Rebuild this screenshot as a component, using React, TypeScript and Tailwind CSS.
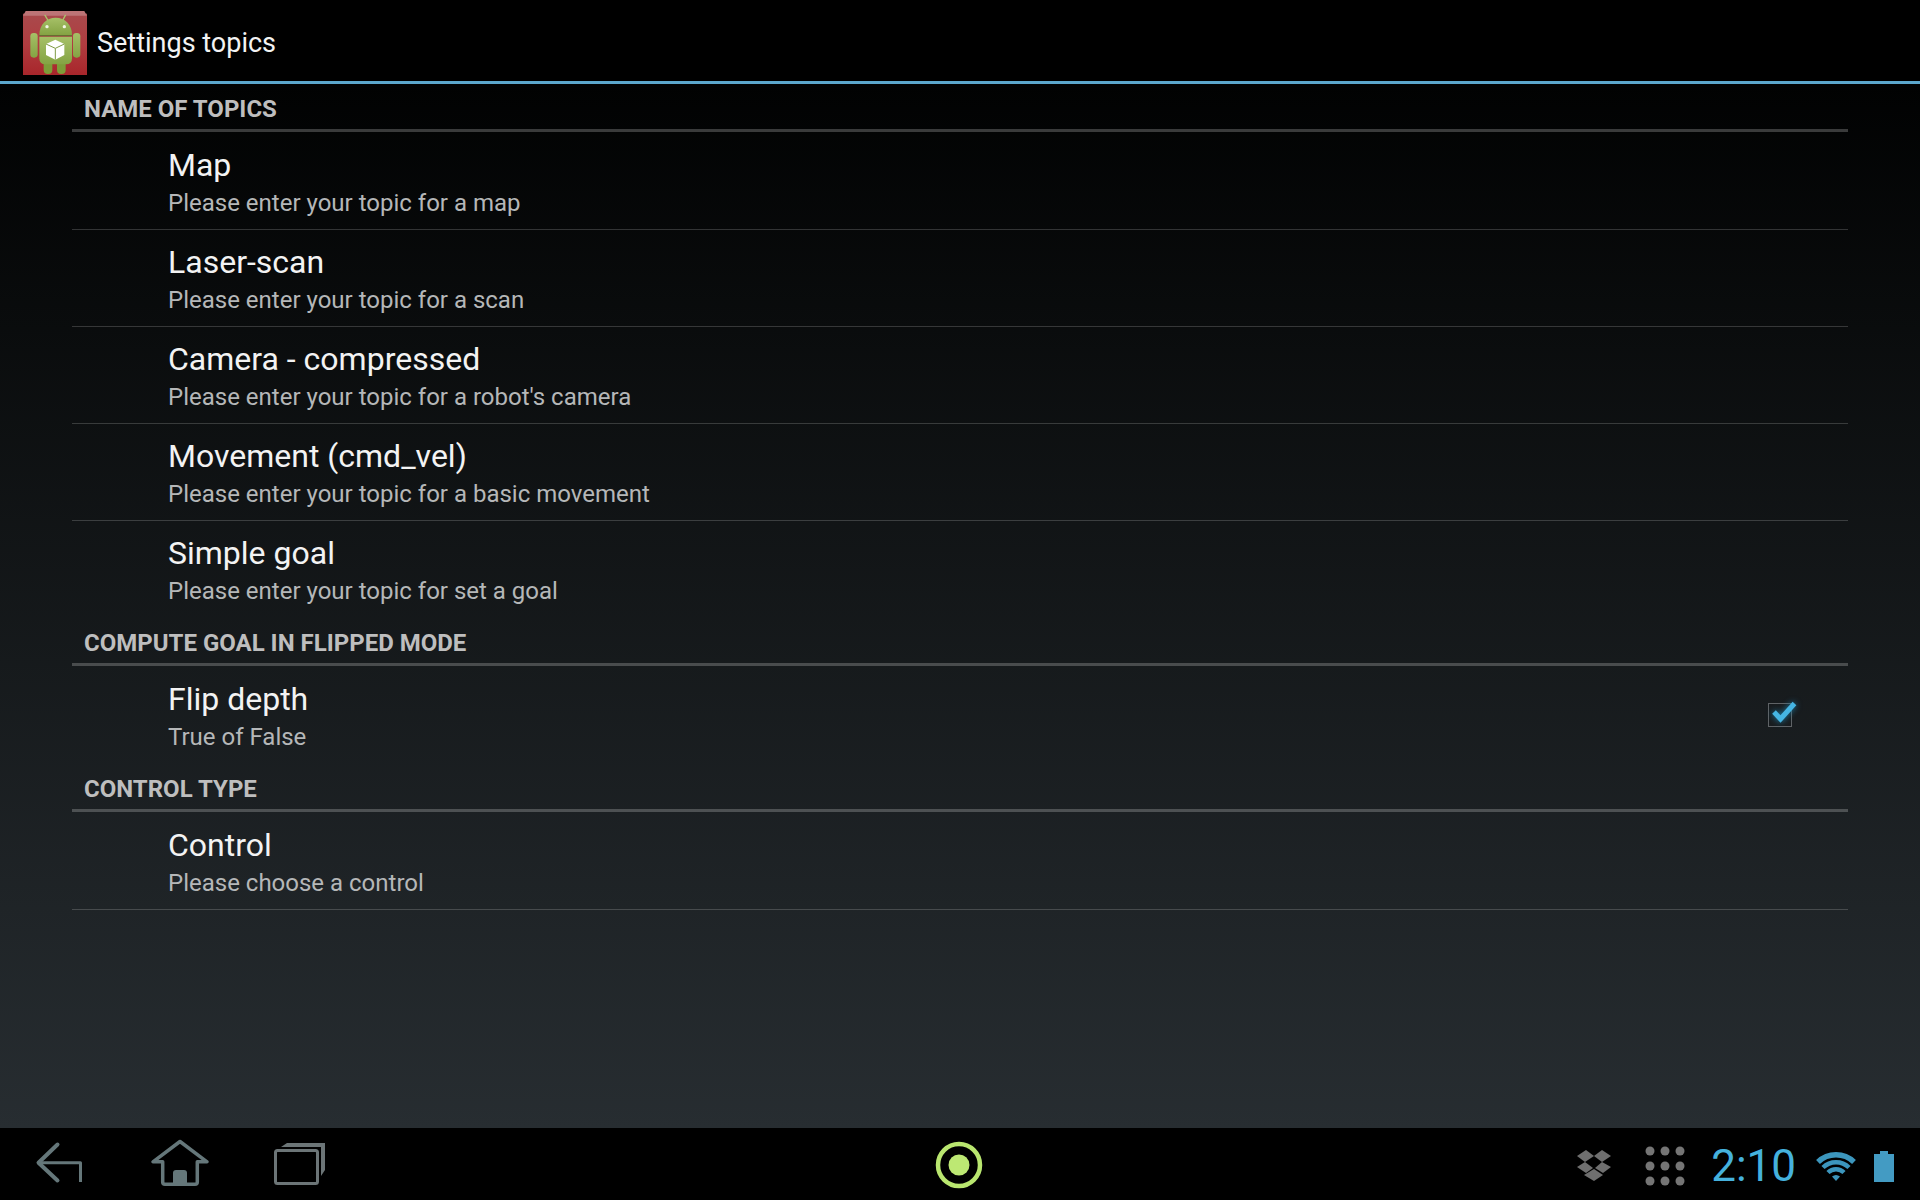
import { useState } from "react";

interface Preference {
  title: string;
  summary: string;
  kind?: "checkbox";
}

interface Category {
  name: string;
  items: Preference[];
}

const categories: Category[] = [
  {
    name: "NAME OF TOPICS",
    items: [
      { title: "Map", summary: "Please enter your topic for a map" },
      { title: "Laser-scan", summary: "Please enter your topic for a scan" },
      {
        title: "Camera - compressed",
        summary: "Please enter your topic for a robot's camera",
      },
      {
        title: "Movement (cmd_vel)",
        summary: "Please enter your topic for a basic movement",
      },
      { title: "Simple goal", summary: "Please enter your topic for set a goal" },
    ],
  },
  {
    name: "COMPUTE GOAL IN FLIPPED MODE",
    items: [
      { title: "Flip depth", summary: "True of False", kind: "checkbox" },
    ],
  },
  {
    name: "CONTROL TYPE",
    items: [{ title: "Control", summary: "Please choose a control" }],
  },
];

const AppLogo = () => (
  <svg viewBox="0 0 192 192" className="size-16 shrink-0" aria-hidden="true">
    <defs>
      <linearGradient id="red" x1="0" y1="0" x2="0" y2="1">
        <stop offset="0" stopColor="#a94a4c" />
        <stop offset="0.5" stopColor="#b03c40" />
        <stop offset="1" stopColor="#a8262b" />
      </linearGradient>
      <linearGradient id="green" x1="0" y1="0" x2="0" y2="1">
        <stop offset="0" stopColor="#a6c067" />
        <stop offset="1" stopColor="#84a343" />
      </linearGradient>
    </defs>
    <rect y="8" width="192" height="184" fill="url(#red)" />
    <path d="M8 0H184L192 14H0Z" fill="#bd7476" />
    {/* legs and arms */}
    <rect x="62" y="140" width="26" height="49" rx="12" fill="#7d9c38" />
    <rect x="102" y="140" width="26" height="49" rx="12" fill="#7d9c38" />
    <rect x="22" y="66" width="22" height="74" rx="10" fill="url(#green)" />
    <rect x="150" y="66" width="22" height="74" rx="10" fill="url(#green)" />
    {/* head */}
    <path
      d="M66 13L75 28M127 13L119 28"
      stroke="#a9c56a"
      strokeWidth="4"
      strokeLinecap="round"
    />
    <path d="M49 72C49 40 70 20 98 20S147 40 147 72Z" fill="url(#green)" />
    <circle cx="72" cy="47" r="5" fill="#f1f5e4" />
    <circle cx="124" cy="47" r="5" fill="#f1f5e4" />
    {/* body with the box */}
    <path
      d="M49 77H147V142Q147 160 129 160H67Q49 160 49 142Z"
      fill="url(#green)"
    />
    <path d="M49 74H147" stroke="#5d7430" strokeWidth="3" />
    <path d="M97 86L124 99V132L97 146L69 132V99Z" fill="#fff" />
    <path
      d="M69 99L97 112L124 99M97 112V146"
      stroke="#7f9a45"
      strokeWidth="3"
      fill="none"
    />
  </svg>
);

const BackIcon = () => (
  <svg viewBox="0 0 120 72" className="h-18 w-30" fill="none" stroke="#65777a" strokeWidth="3" strokeLinecap="round" strokeLinejoin="round">
    <path d="M57.5 16.5L38.5 34.7L57.5 52.5" strokeWidth="4" />
    <path d="M39 34.7H80.5V54" strokeLinecap="butt" />
  </svg>
);

const HomeIcon = () => (
  <svg viewBox="0 0 120 72" className="h-18 w-30" fill="none" stroke="#65777a" strokeWidth="3.5" strokeLinejoin="round">
    <path d="M60 13.5L33 33.8H42.7V54Q42.7 56.3 45 56.3H75Q77.3 56.3 77.3 54V33.8H87L60 13.5Z" />
    <path d="M53 56V45Q53 42 56 42H64Q67 42 67 45V56Z" fill="#65777a" stroke="none" />
  </svg>
);

const RecentIcon = () => (
  <svg viewBox="0 0 120 72" className="h-18 w-30" fill="none" stroke="#6c7577" strokeWidth="3">
    <rect x="35.5" y="22.5" width="42" height="33" rx="2" />
    <path d="M41 19L47 15H85V42L81 48V19Z" fill="#6c7577" stroke="none" />
  </svg>
);

const DropboxIcon = () => (
  <svg viewBox="0 0 34 32" className="h-8 w-[34px]" fill="#6f6f6f" aria-hidden="true">
    <path d="M9 0L17 6L8 12L0 6Z" />
    <path d="M25 0L34 6L25 12L17 6Z" />
    <path d="M8 12L16 18L9 23L0 17Z" />
    <path d="M25 12L34 17L26 23L18 18Z" />
    <path d="M17 19L26 25L17 31L7 25Z" />
  </svg>
);

const DotsIcon = () => (
  <svg viewBox="0 0 40 40" className="size-10" fill="#757575" aria-hidden="true">
    {[5, 20, 35].map((y) =>
      [5, 20, 35].map((x) => <circle key={`${x}-${y}`} cx={x} cy={y} r="4.5" />)
    )}
  </svg>
);

const WifiIcon = () => (
  <svg viewBox="0 0 40 30" className="h-[30px] w-10" fill="none" stroke="#3c96bd" aria-hidden="true">
    <path d="M2 11A26 26 0 0 1 38 11" strokeWidth="5.5" />
    <path d="M7 16.5A18.5 18.5 0 0 1 33 16.5" strokeWidth="4.5" />
    <path d="M12 21.5A11.5 11.5 0 0 1 28 21.5" strokeWidth="4.5" />
    <path d="M16 25.5Q20 22.5 24 25.5L20 30Z" fill="#3c96bd" stroke="none" />
  </svg>
);

const BatteryIcon = () => (
  <svg viewBox="0 0 20 31" className="h-[31px] w-5" fill="#439bc3" aria-hidden="true">
    <path d="M6 0H14V3H20V31H0V3H6Z" />
  </svg>
);

const PreferenceText = ({ title, summary }: Preference) => (
  <span className="flex flex-col pt-1.5">
    <span className="text-[32px] leading-[38px] text-[#f3f3f3]">{title}</span>
    <span className="text-2xl leading-[38px] text-[#b5b7b8]">{summary}</span>
  </span>
);

const PreferenceRow = (item: Preference) => {
  const [checked, setChecked] = useState(true);

  if (item.kind === "checkbox") {
    return (
      <label className="flex h-24 items-center justify-between pr-14 pl-24">
        <PreferenceText {...item} />
        <span className="relative size-6">
          <input
            type="checkbox"
            checked={checked}
            onChange={(e) => setChecked(e.target.checked)}
            className="block size-6 appearance-none border border-[#5f6366]"
          />
          {checked && (
            <svg
              viewBox="0 0 32 28"
              className="pointer-events-none absolute -top-1 left-0 h-7 w-8 drop-shadow-[0_0_3px_#1d7fa8]"
              fill="none"
              stroke="#45b5e3"
              strokeWidth="5"
            >
              <path d="M6 13L12.5 20L26.5 4.5" />
            </svg>
          )}
        </span>
      </label>
    );
  }

  return (
    <button type="button" className="flex h-24 w-full items-center pl-24 text-left">
      <PreferenceText {...item} />
    </button>
  );
};

const App = () => {
  return (
    <div className="flex min-h-screen flex-col bg-black font-['Roboto',sans-serif]">
      <header className="flex h-21 items-center gap-2.5 border-b-3 border-[#5ba7cd] bg-black pt-1 pl-[23px]">
        <AppLogo />
        <h1 className="text-[27px] leading-9 text-[#f3f3f3]">Settings topics</h1>
      </header>

      <main className="flex-1 bg-linear-to-b/srgb from-[#010202] to-[#272d31] px-18">
        {categories.map((category, i) => (
          <section key={category.name}>
            <h2 className="flex h-12 items-center border-b-3 border-white/22 pt-1 pl-3 text-2xl font-bold text-[#bebebe]">
              {category.name}
            </h2>
            <ul className="pt-px">
              {category.items.map((item, j) => (
                <li
                  key={item.title}
                  className={
                    j < category.items.length - 1 || i === categories.length - 1
                      ? "border-b border-white/18"
                      : "border-b border-transparent"
                  }
                >
                  <PreferenceRow {...item} />
                </li>
              ))}
            </ul>
          </section>
        ))}
      </main>

      {/* System bar */}
      <footer className="grid h-18 grid-cols-[1fr_auto_1fr] items-center bg-black">
        <nav className="flex">
          <button type="button" aria-label="Back">
            <BackIcon />
          </button>
          <button type="button" aria-label="Home">
            <HomeIcon />
          </button>
          <button type="button" aria-label="Recent apps">
            <RecentIcon />
          </button>
        </nav>
        <button type="button" aria-label="Menu">
          <svg viewBox="0 0 60 60" className="size-15" fill="none">
            <circle cx="29" cy="31" r="21" stroke="#b9e66f" strokeWidth="4.5" />
            <circle cx="29" cy="31" r="10.5" fill="#bde873" />
          </svg>
        </button>
        <div className="flex items-center justify-end pt-1 pr-[26px]">
          <DropboxIcon />
          <div className="ml-[34px]">
            <DotsIcon />
          </div>
          <time className="ml-[26px] text-[44px] leading-none text-[#45b1dd]">2:10</time>
          <div className="ml-5">
            <WifiIcon />
          </div>
          <div className="ml-[18px]">
            <BatteryIcon />
          </div>
        </div>
      </footer>
    </div>
  );
};

export default App;
